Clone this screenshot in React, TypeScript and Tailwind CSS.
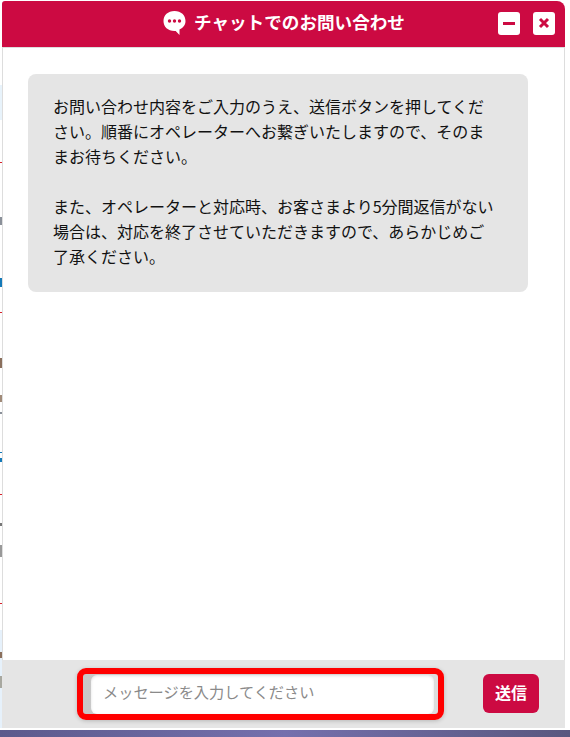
const jp = "font-['Meiryo','Noto_Sans_CJK_JP','Noto_Sans',sans-serif]";

function PageEdge() {
  // bits of the page behind the chat window, only 2px is visible
  return (
    <div className="flex w-[2px] shrink-0 flex-col bg-white">
      <div className="mt-[84px] h-[35px] bg-[#e8f3fb]" />
      <div className="mt-[42px] h-px bg-[#d8202a]" />
      <div className="mt-[54px] h-[8px] bg-[#8a9099]" />
      <div className="mt-[53px] h-[9px] bg-[#1479b8]" />
      <div className="mt-[25px] h-px bg-[#d8202a]" />
      <div className="mt-[45px] h-[10px] bg-[#8a6f5c]" />
      <div className="mt-[27px] h-[7px] bg-[#a08a78]" />
      <div className="mt-[10px] h-[2px] bg-[#8a9099]" />
      <div className="mt-[38px] h-px bg-[#1479b8]" />
      <div className="mt-[5px] h-[4px] bg-[#1479b8]" />
      <div className="mt-[32px] h-px bg-[#d8202a]" />
      <div className="mt-[28px] h-[3px] bg-[#777]" />
      <div className="mt-[19px] h-[12px] bg-[#999]" />
      <div className="mt-[46px] h-px bg-[#d8202a]" />
      <div className="mt-[26px] h-[22px] bg-[#e6f1fb]" />
      <div className="h-[6px] bg-[#8a6f5c]" />
      <div className="h-[18px] bg-[#e6f1fb]" />
      <div className="h-[12px] bg-[#a8a8a0]" />
      <div className="h-[40px] bg-[#e6f1fb]" />
    </div>
  );
}

export default function App() {
  return (
    <div className={`flex h-[737px] w-[570px] flex-col overflow-hidden bg-white ${jp}`}>
      <div className="flex h-[728px] shrink-0 pt-px">
        <PageEdge />
        <div className="flex w-[563px] flex-col">
          <header className="flex h-[46px] shrink-0 items-center rounded-tl-[3px] rounded-tr-[8px] bg-[#cc0a42] pr-[10px] pb-[2px] pl-[160px]">
            <svg width="25" height="26" viewBox="0 0 24 26" className="shrink-0">
              <path d="M12 1C5.400 1 1 5.200 1 11s4.400 10 11 10c.6 0 .8 0 1.200-.1L17 25v-5.500c3.800-1.600 6-4.700 6-8.500C23 5.200 18.600 1 12 1z" fill="#fff" />
              <circle cx="7" cy="11" r="1.700" fill="#cc0a42" />
              <circle cx="12" cy="11" r="1.700" fill="#cc0a42" />
              <circle cx="17" cy="11" r="1.700" fill="#cc0a42" />
            </svg>
            <h1 className="ml-[7px] -translate-y-px text-[17.6px] font-bold whitespace-nowrap text-white">チャットでのお問い合わせ</h1>
            <div className="ml-auto flex gap-[13px]">
              <button className="flex h-[23px] w-[22px] items-center justify-center rounded-[3px] bg-white">
                <span className="h-[3px] w-[12px] bg-[#cc0a42]" />
              </button>
              <button className="flex h-[23px] w-[22px] items-center justify-center rounded-[3px] bg-white">
                <svg width="12" height="12" viewBox="0 0 12 12">
                  <path d="M2 2l8 8M10 2l-8 8" stroke="#cc0a42" strokeWidth="3" />
                </svg>
              </button>
            </div>
          </header>
          <main className="flex-1 border-x border-t border-[#dddddd] bg-white pt-[26px] pl-[25px]">
            <div className="w-[500px] rounded-[8px] bg-[#e5e5e5] pt-[20px] pr-[26px] pb-[23px] pl-[25px] text-[16px] leading-[25px] text-[#111]">
              <p>
                お問い合わせ内容をご入力のうえ、送信ボタンを押してくだ<br />
                さい。順番にオペレーターへお繋ぎいたしますので、そのま<br />
                まお待ちください。
              </p>
              <p className="mt-[25px]">
                また、オペレーターと対応時、お客さまより5分間返信がない<br />
                場合は、対応を終了させていただきますので、あらかじめご<br />
                了承ください。
              </p>
            </div>
          </main>
          <footer className="flex h-[68px] shrink-0 items-center bg-[#e5e5e5] pb-px pl-[75px]">
            <div className="h-[52px] w-[367px] rounded-[9px] border-[6px] border-[#ff0000] bg-gradient-to-r from-[#c8c8c8] to-[#dddddd] pt-[1px] pr-[4px] pl-[8px] shadow-[0_1px_4px_rgba(0,0,0,0.2)]">
              <input
                placeholder="メッセージを入力してください"
                className="h-[39px] w-full rounded-[6px] bg-white px-[12px] pb-[6px] text-[15.2px] text-[#333] shadow-[inset_0_1px_3px_rgba(0,0,0,0.12)] outline-none placeholder:text-[#8a8a8a]"
              />
            </div>
            <button className="ml-[39px] h-[39px] w-[56px] rounded-[6px] bg-[#cc0a42] pb-[4px] text-[16px] font-bold text-white">送信</button>
          </footer>
        </div>
      </div>
      <div className="mt-[2px] h-[7px] bg-gradient-to-r from-[#5c5a8c] via-[#7570ad] to-[#59587f]" />
    </div>
  );
}
